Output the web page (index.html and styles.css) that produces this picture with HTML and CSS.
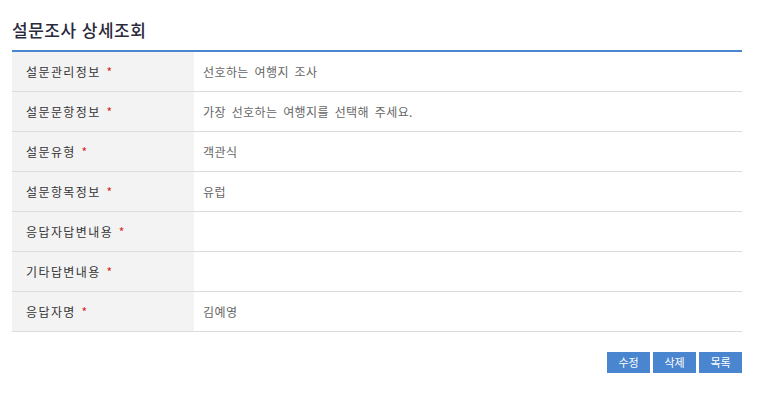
FILE: index.html
```html
<!DOCTYPE html>
<html lang="ko">
<head>
<meta charset="utf-8">
<title>설문조사 상세조회</title>
<link rel="stylesheet" href="styles.css">
</head>
<body>
<div class="page">
  <h2 class="title">설문조사 상세조회</h2>
  <table class="detail">
    <tr><th>설문관리정보 <span class="req">*</span></th><td>선호하는 여행지 조사</td></tr>
    <tr><th>설문문항정보 <span class="req">*</span></th><td>가장 선호하는 여행지를 선택해 주세요.</td></tr>
    <tr><th>설문유형 <span class="req">*</span></th><td>객관식</td></tr>
    <tr><th>설문항목정보 <span class="req">*</span></th><td>유럽</td></tr>
    <tr><th>응답자답변내용 <span class="req">*</span></th><td></td></tr>
    <tr><th>기타답변내용 <span class="req">*</span></th><td></td></tr>
    <tr><th>응답자명 <span class="req">*</span></th><td>김예영</td></tr>
  </table>
  <div class="actions">
    <button class="btn">수정</button>
    <button class="btn">삭제</button>
    <button class="btn">목록</button>
  </div>
</div>
</body>
</html>
```
FILE: styles.css
```css
html, body {
  margin: 0;
  padding: 0;
  background: #fff;
}
body {
  font-family: "Noto Sans CJK KR", "Noto Sans", sans-serif;
  font-size: 12px;
  color: #333;
}
.page {
  width: 730px;
  padding: 0 0 0 12px;
}
.title {
  margin: 0;
  padding: 18px 0 8px;
  height: 24px;
  font-size: 17px;
  font-weight: 500;
  line-height: 24px;
  color: #2a2a3c;
  letter-spacing: 0.5px;
}
.detail {
  width: 730px;
  border-collapse: collapse;
  border-top: 2px solid #4a86cf;
}
.detail th, .detail td {
  height: 39px;
  padding: 0;
  border-bottom: 1px solid #dcdcdc;
  text-align: left;
  font-weight: normal;
  vertical-align: middle;
}
.detail th {
  width: 168px;
  padding-left: 14px;
  background: #f3f3f3;
  color: #333;
  letter-spacing: 1.4px;
  word-spacing: 1px;
}
.detail td {
  padding-left: 9px;
  color: #666;
  letter-spacing: 0.4px;
  word-spacing: 2px;
}
.req {
  color: #d42a1a;
}
.actions {
  display: flex;
  justify-content: flex-end;
  gap: 3px;
  margin-top: 20px;
}
.btn {
  width: 43px;
  height: 21px;
  padding: 0;
  border: 0;
  background: #4a86cf;
  color: #fff;
  font-family: inherit;
  font-size: 11px;
  line-height: 21px;
}
```
